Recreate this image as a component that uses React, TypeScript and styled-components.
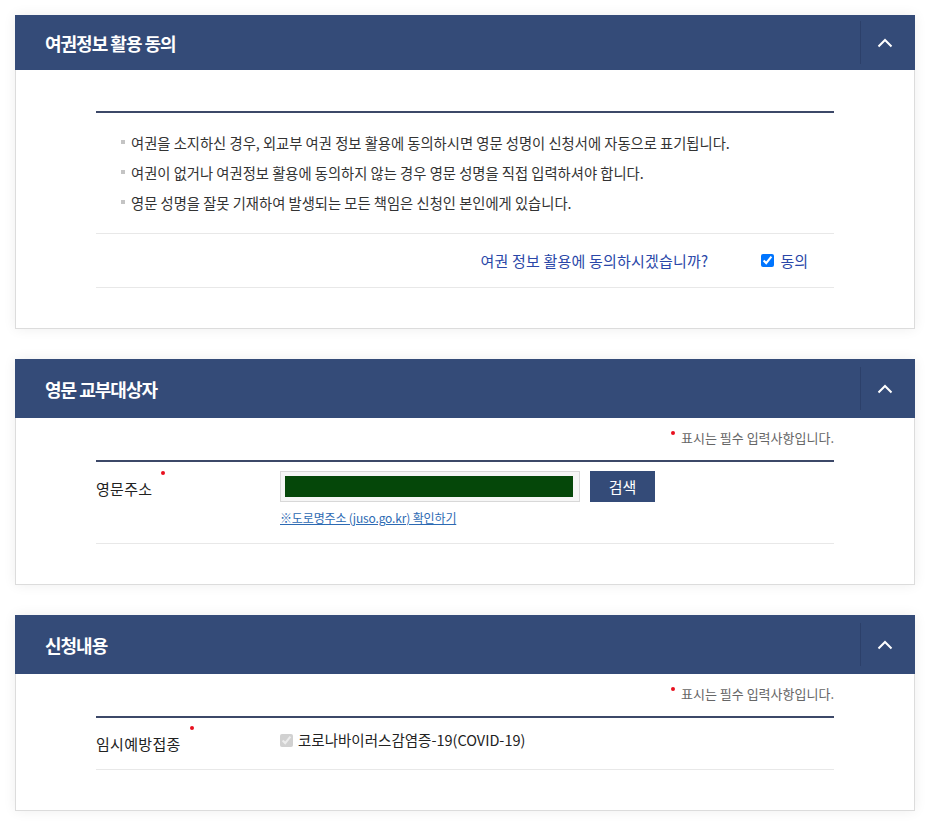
import React from "react";
import styled, { createGlobalStyle } from "styled-components";

const GlobalStyle = createGlobalStyle`
  html, body {
    margin: 0;
    padding: 0;
    background: #ffffff;
    font-family: "Noto Sans CJK KR", "Noto Sans", sans-serif;
    color: #222;
  }
`;

const Page = styled.div`
  display: flex;
  flex-direction: column;
  gap: 30px;
  width: 900px;
  padding: 15px 20px 15px 15px;
`;

const Panel = styled.section`
  background: #fff;
  box-shadow: 0 0 12px rgba(0, 0, 0, 0.07);
`;

const Header = styled.header<{ $h: number }>`
  display: flex;
  align-items: center;
  height: ${(p) => p.$h}px;
  background: #344b78;
  padding-left: 30px;
`;

const Title = styled.h2`
  margin: 0;
  font-size: 18px;
  font-weight: 700;
  letter-spacing: -1px;
  color: #fff;
`;

const Toggle = styled.button`
  margin-left: auto;
  width: 55px;
  height: 43px;
  display: flex;
  align-items: center;
  justify-content: center;
  background: transparent;
  border: none;
  border-left: 1px solid #2c406a;
  padding: 0 6px 0 0;
  cursor: pointer;
`;

const Body = styled.div<{ $pt: number }>`
  border: 1px solid #dcdcdc;
  border-top: none;
  padding: ${(p) => p.$pt}px 80px 40px;
`;

const Rule = styled.div<{ $mt: number }>`
  height: 2px;
  background: #3c4868;
  margin-top: ${(p) => p.$mt}px;
`;

const BulletList = styled.ul`
  list-style: none;
  margin: 0;
  padding: 14px 0 16px 25px;
  border-bottom: 1px solid #e8e8e8;
`;

const Bullet = styled.li`
  display: flex;
  align-items: center;
  gap: 6px;
  height: 30px;
  font-size: 14.3px;
  color: #333;
  &::before {
    content: "";
    width: 4px;
    height: 4px;
    background: #c4c4c4;
    flex: none;
  }
`;

const ConsentRow = styled.div`
  display: flex;
  align-items: center;
  justify-content: flex-end;
  height: 53px;
  padding-right: 26px;
  border-bottom: 1px solid #e8e8e8;
`;

const Question = styled.span`
  font-size: 15px;
  letter-spacing: 0.2px;
  color: #2a47a8;
  margin-right: 53px;
`;

const CheckLabel = styled.label`
  display: flex;
  align-items: center;
  gap: 6px;
  font-size: 15px;
  color: #2a47a8;
`;

const Check = styled.input`
  width: 13px;
  height: 13px;
  margin: 0;
`;

const Note = styled.p`
  margin: 0;
  line-height: 20px;
  font-size: 13px;
  color: #666;
  text-align: right;
`;

const Dot = styled.span`
  display: inline-block;
  flex: none;
  width: 4px;
  height: 4px;
  border-radius: 50%;
  background: #e8101e;
`;

const NoteDot = styled(Dot)`
  margin-right: 6px;
  vertical-align: 8px;
`;

const FormRow = styled.div<{ $pt: number; $pb: number }>`
  display: grid;
  grid-template-columns: 184px 1fr;
  align-items: start;
  padding: ${(p) => p.$pt}px 0 ${(p) => p.$pb}px;
  border-bottom: 1px solid #e8e8e8;
`;

const Label = styled.div<{ $mt: number }>`
  display: flex;
  align-items: flex-start;
  height: 20px;
  margin-top: ${(p) => p.$mt}px;
  line-height: 20px;
  font-size: 15px;
  letter-spacing: 0.3px;
  color: #222;
`;

const LabelDot = styled(Dot)`
  margin: -8px 0 0 9px;
`;

const Field = styled.div`
  display: flex;
  flex-direction: column;
  align-items: flex-start;
`;

const InputGroup = styled.div`
  display: flex;
  gap: 10px;
`;

const InputBox = styled.div`
  box-sizing: border-box;
  width: 300px;
  height: 31px;
  border: 1px solid #d8d8d8;
  background: #f6f6f6;
  padding: 4px 6px 4px 4px;
`;

const Filled = styled.div`
  width: 100%;
  height: 100%;
  background: #054709;
`;

const SearchButton = styled.button`
  width: 65px;
  height: 31px;
  border: none;
  background: #344b78;
  color: #fff;
  font-family: inherit;
  font-size: 15px;
  cursor: pointer;
`;

const JusoLink = styled.a`
  margin-top: 8px;
  line-height: 16px;
  font-size: 12px;
  letter-spacing: -0.15px;
  color: #2d6ab3;
  text-decoration: underline;
`;

const CovidOption = styled.label`
  display: flex;
  align-items: center;
  gap: 5px;
  line-height: 20px;
  font-size: 14.5px;
  color: #222;
`;

const Chevron = () => (
  <svg width="16" height="10" viewBox="0 0 16 10" aria-hidden="true">
    <polyline points="1.5,8.5 8,2 14.5,8.5" fill="none" stroke="#fff" strokeWidth="2" />
  </svg>
);

const PanelHead = ({ title, h }: { title: string; h: number }) => (
  <Header $h={h}>
    <Title>{title}</Title>
    <Toggle aria-label="접기">
      <Chevron />
    </Toggle>
  </Header>
);

const RequiredNote = () => (
  <Note>
    <NoteDot />
    표시는 필수 입력사항입니다.
  </Note>
);

export default function App() {
  return (
    <>
      <GlobalStyle />
      <Page>
        <Panel>
          <PanelHead title="여권정보 활용 동의" h={55} />
          <Body $pt={41}>
            <Rule $mt={0} />
            <BulletList>
              <Bullet>여권을 소지하신 경우, 외교부 여권 정보 활용에 동의하시면 영문 성명이 신청서에 자동으로 표기됩니다.</Bullet>
              <Bullet>여권이 없거나 여권정보 활용에 동의하지 않는 경우 영문 성명을 직접 입력하셔야 합니다.</Bullet>
              <Bullet>영문 성명을 잘못 기재하여 발생되는 모든 책임은 신청인 본인에게 있습니다.</Bullet>
            </BulletList>
            <ConsentRow>
              <Question>여권 정보 활용에 동의하시겠습니까?</Question>
              <CheckLabel>
                <Check type="checkbox" defaultChecked />
                동의
              </CheckLabel>
            </ConsentRow>
          </Body>
        </Panel>

        <Panel>
          <PanelHead title="영문 교부대상자" h={59} />
          <Body $pt={10}>
            <RequiredNote />
            <Rule $mt={12} />
            <FormRow $pt={9} $pb={17}>
              <Label $mt={8}>
                영문주소
                <LabelDot />
              </Label>
              <Field>
                <InputGroup>
                  <InputBox>
                    <Filled />
                  </InputBox>
                  <SearchButton>검색</SearchButton>
                </InputGroup>
                <JusoLink href="#">※도로명주소 (juso.go.kr) 확인하기</JusoLink>
              </Field>
            </FormRow>
          </Body>
        </Panel>

        <Panel>
          <PanelHead title="신청내용" h={59} />
          <Body $pt={10}>
            <RequiredNote />
            <Rule $mt={12} />
            <FormRow $pt={12} $pb={15}>
              <Label $mt={4}>
                임시예방접종
                <LabelDot />
              </Label>
              <Field>
                <CovidOption>
                  <Check type="checkbox" defaultChecked disabled />
                  코로나바이러스감염증-19(COVID-19)
                </CovidOption>
              </Field>
            </FormRow>
          </Body>
        </Panel>
      </Page>
    </>
  );
}
